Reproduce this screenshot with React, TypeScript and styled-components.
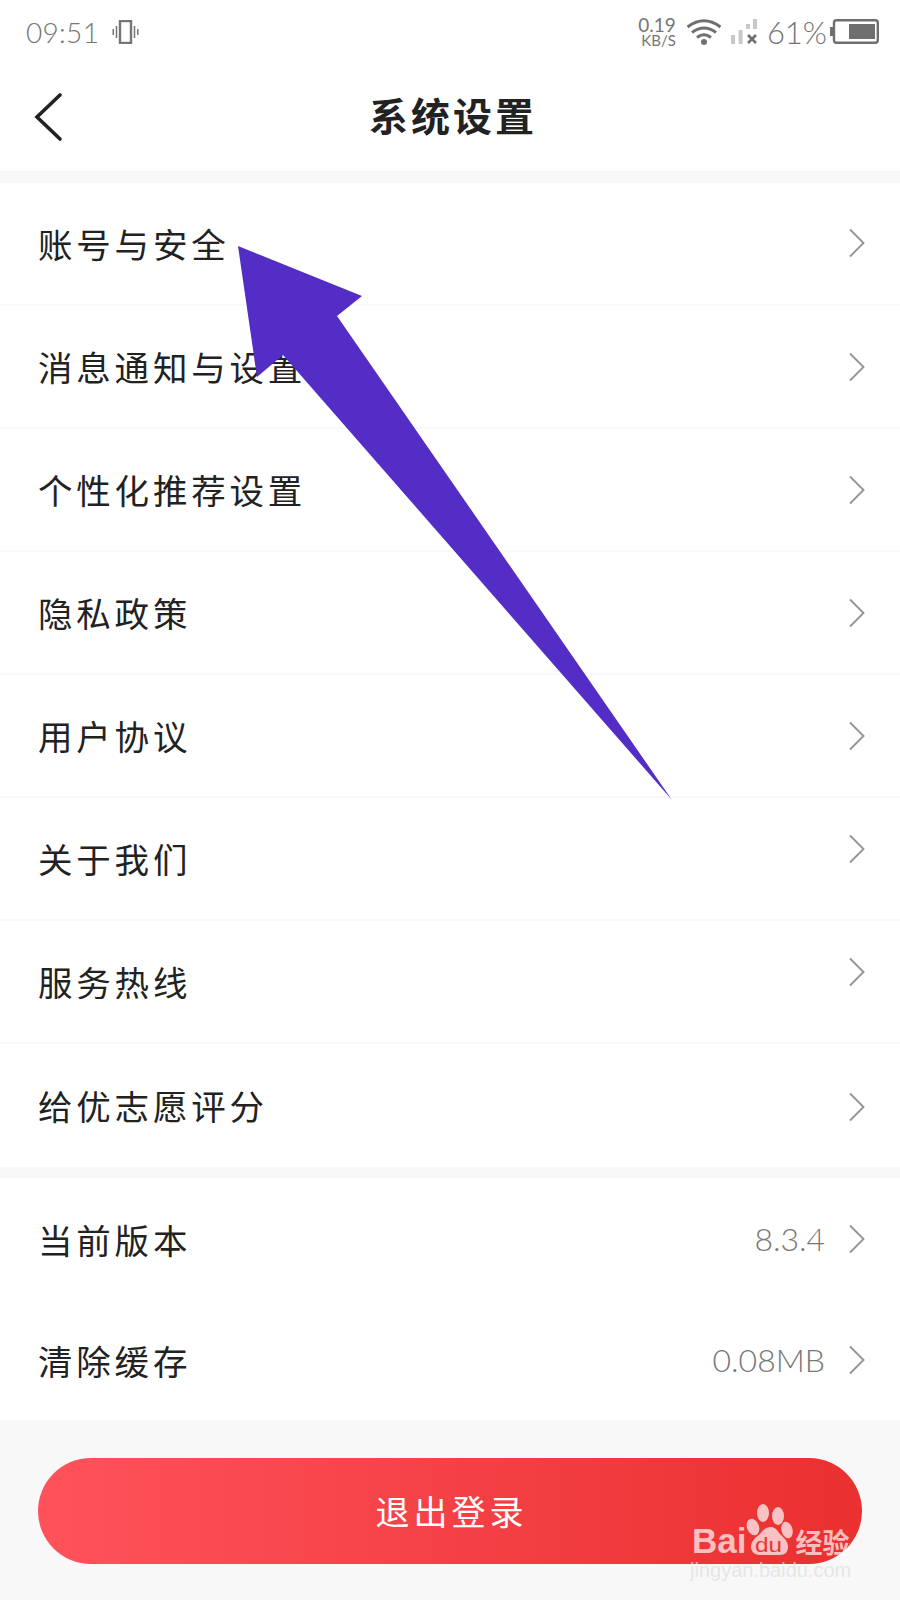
import React from "react";
import styled, { createGlobalStyle } from "styled-components";

const Global = createGlobalStyle`
  html, body { margin: 0; padding: 0; background: #fff; }
  body { font-family: "Noto Sans CJK SC", "Noto Sans", sans-serif; }
`;

const Page = styled.div`
  position: relative;
  width: 900px;
  height: 1600px;
  overflow: hidden;
  background: #f8f8f8;
  display: flex;
  flex-direction: column;
`;

const StatusBar = styled.div`
  height: 66px;
  box-sizing: border-box;
  background: #fff;
  display: flex;
  align-items: center;
  justify-content: space-between;
  padding: 0 21px 3px 26px;
  color: #757575;
`;

const StatusGroup = styled.div`
  display: flex;
  align-items: center;
`;

const Time = styled.span`
  font-family: Lato, sans-serif;
  font-weight: 300;
  font-size: 28px;
  letter-spacing: 0.3px;
  margin-right: 13px;
`;

const Speed = styled.div`
  font-family: Lato, sans-serif;
  display: flex;
  flex-direction: column;
  align-items: flex-end;
  margin-right: 11px;
`;

const SpeedValue = styled.span`
  font-size: 19px;
  font-weight: 400;
  line-height: 17px;
`;

const SpeedUnit = styled.span`
  font-size: 15px;
  line-height: 14px;
`;

const Battery = styled.span`
  font-family: Lato, sans-serif;
  font-weight: 300;
  font-size: 31px;
  margin: 0 3px 0 10px;
`;

const Header = styled.header`
  height: 105px;
  background: #fff;
  display: flex;
  align-items: center;
  justify-content: center;
  position: relative;
`;

const BackButton = styled.svg`
  position: absolute;
  left: 33px;
  top: 26px;
`;

const Title = styled.h1`
  margin: 0 0 10px 6px;
  font-size: 39px;
  font-weight: 700;
  letter-spacing: 3px;
  color: #222;
  line-height: 48px;
  font-family: "Noto Sans CJK SC", sans-serif;
`;

const Section = styled.section`
  margin-top: 11.5px;
  background: #fff;
`;

const Row = styled.div<{ $h: number; $line?: boolean }>`
  height: ${(p) => p.$h}px;
  box-sizing: border-box;
  padding: 0 34px 0 38px;
  display: flex;
  align-items: center;
  justify-content: space-between;
  border-bottom: ${(p) => (p.$line ? "2px solid #f9f9f9" : "none")};
`;

const Label = styled.span`
  font-size: 34.5px;
  letter-spacing: 3.8px;
  color: #222;
  font-weight: 400;
  line-height: 44px;
`;

const RightSide = styled.div`
  display: flex;
  align-items: center;
  gap: 23px;
`;

const Value = styled.span`
  font-family: Lato, sans-serif;
  font-weight: 300;
  font-size: 32px;
  color: #777;
`;

const Footer = styled.div`
  flex: 1;
  padding: 38px 38px 0;
`;

const LogoutButton = styled.button`
  width: 824px;
  height: 106px;
  border: none;
  border-radius: 53px;
  padding: 0 0 2px 3px;
  background: linear-gradient(90deg, #ff525b 0%, #ea3030 100%);
  color: #fff;
  font-family: "Noto Sans CJK SC", sans-serif;
  font-size: 34px;
  letter-spacing: 4px;
  display: block;
`;

const Arrow = styled.svg`
  position: absolute;
  left: 0;
  top: 0;
  pointer-events: none;
`;

const Watermark = styled.div`
  position: absolute;
  left: 692px;
  top: 1504px;
  width: 170px;
  color: rgba(255, 255, 255, 0.7);
  pointer-events: none;
`;

const BrandLine = styled.div`
  display: flex;
  align-items: flex-end;
  height: 51px;
`;

const BrandLatin = styled.span`
  font-family: "Liberation Sans", sans-serif;
  font-weight: 700;
  font-size: 35px;
  line-height: 35px;
  margin-bottom: -3px;
`;

const BrandCn = styled.span`
  font-family: "Noto Sans CJK SC", sans-serif;
  font-size: 27px;
  font-weight: 700;
  line-height: 27px;
  margin-left: 2px;
`;

const BrandUrl = styled.div`
  font-family: "Liberation Sans", sans-serif;
  font-size: 20px;
  line-height: 24px;
  margin: 3px 0 0 -2px;
  white-space: nowrap;
  color: rgba(225, 225, 225, 0.8);
`;

const ChevronIcon = styled.svg<{ $shift: number }>`
  transform: translateY(${(p) => p.$shift}px);
`;

const Chevron = ({ shift = 0 }: { shift?: number }) => (
  <ChevronIcon $shift={shift} width="18" height="30" viewBox="0 0 18 30">
    <path d="M2 1.5 L15.5 15 L2 28.5" fill="none" stroke="#959595" strokeWidth="1.9" />
  </ChevronIcon>
);

const items = [
  { label: "账号与安全", shift: 0 },
  { label: "消息通知与设置", shift: 1 },
  { label: "个性化推荐设置", shift: 1 },
  { label: "隐私政策", shift: 1 },
  { label: "用户协议", shift: 1 },
  { label: "关于我们", shift: -9 },
  { label: "服务热线", shift: -9 },
  { label: "给优志愿评分", shift: 2 },
];

export default function App() {
  return (
    <Page>
      <Global />
      <StatusBar>
        <StatusGroup>
          <Time>09:51</Time>
          <svg width="27" height="24" viewBox="0 0 27 24" fill="none" stroke="#757575">
            <rect x="8" y="1" width="11" height="22" strokeWidth="2.4" />
            <path d="M4.5 6v12M1.2 9v6M22.5 6v12M25.8 9v6" strokeWidth="1.5" />
          </svg>
        </StatusGroup>
        <StatusGroup>
          <Speed>
            <SpeedValue>0.19</SpeedValue>
            <SpeedUnit>KB/S</SpeedUnit>
          </Speed>
          <svg width="34" height="26" viewBox="0 0 34 26" fill="none" stroke="#6f6f6f" strokeWidth="3">
            <path d="M0.5 8Q17 -4.5 33.5 8" />
            <path d="M5 13.5Q17 4.5 29 13.5" />
            <path d="M10 18.5Q17 13 24 18.5" />
            <circle cx="17" cy="23" r="3" fill="#6f6f6f" stroke="none" />
          </svg>
          <svg width="26" height="25" viewBox="0 0 26 25" style={{ marginLeft: 10 }}>
            <rect x="0" y="16" width="4" height="9" fill="#c8c8c8" />
            <rect x="7.6" y="11" width="4" height="14" fill="#c8c8c8" />
            <rect x="15" y="5" width="4" height="5" fill="#c8c8c8" />
            <rect x="22" y="0" width="4" height="10" fill="#c8c8c8" />
            <path d="M17 16 L25 24 M25 16 L17 24" stroke="#6f6f6f" strokeWidth="2.6" />
          </svg>
          <Battery>61%</Battery>
          <svg width="49" height="25" viewBox="0 0 49 25">
            <rect x="4" y="1.2" width="43.8" height="22.6" rx="2.5" fill="none" stroke="#6f6f6f" strokeWidth="2.4" />
            <rect x="0" y="8" width="3" height="9" fill="#6f6f6f" />
            <rect x="19" y="5" width="26" height="15" fill="#6f6f6f" />
          </svg>
        </StatusGroup>
      </StatusBar>
      <Header>
        <BackButton width="30" height="50" viewBox="0 0 30 50">
          <path d="M27 3 L4 25 L27 47" fill="none" stroke="#222" strokeWidth="3.6" strokeLinecap="round" />
        </BackButton>
        <Title>系统设置</Title>
      </Header>
      <Section>
        {items.map((item, i) => (
          <Row key={item.label} $h={123} $line={i < items.length - 1}>
            <Label>{item.label}</Label>
            <Chevron shift={item.shift} />
          </Row>
        ))}
      </Section>
      <Section>
        <Row $h={121}>
          <Label>当前版本</Label>
          <RightSide>
            <Value>8.3.4</Value>
            <Chevron />
          </RightSide>
        </Row>
        <Row $h={121}>
          <Label>清除缓存</Label>
          <RightSide>
            <Value>0.08MB</Value>
            <Chevron />
          </RightSide>
        </Row>
      </Section>
      <Footer>
        <LogoutButton>退出登录</LogoutButton>
      </Footer>
      <Arrow width="900" height="1600" viewBox="0 0 900 1600">
        <polygon points="238,246 362,296 337,316 672,800 283,355 257,377" fill="#532dc6" />
      </Arrow>
      <Watermark>
        <BrandLine>
          <BrandLatin>Bai</BrandLatin>
          <svg width="47" height="51" viewBox="0 0 47 51">
            <g fill="rgba(255,255,255,0.7)">
              <ellipse cx="7" cy="23" rx="6" ry="8.5" transform="rotate(-20 7 23)" />
              <ellipse cx="17" cy="9" rx="6" ry="9" />
              <ellipse cx="32" cy="12" rx="6" ry="9" />
              <ellipse cx="41" cy="26" rx="5.5" ry="8.5" transform="rotate(-15 41 26)" />
              <path d="M25 23c-5 0-8 3-11 7-4 3-9 7-9 13 0 5 4 8 9 8h20c5 0 8-3 8-8 0-6-4-9-8-13-3-4-5-7-9-7z" />
            </g>
            <text x="9" y="48" fontFamily="Liberation Sans, sans-serif" fontSize="21" textLength="27" lengthAdjust="spacingAndGlyphs" fill="#ea3636">du</text>
          </svg>
          <BrandCn>经验</BrandCn>
        </BrandLine>
        <BrandUrl>jingyan.baidu.com</BrandUrl>
      </Watermark>
    </Page>
  );
}
